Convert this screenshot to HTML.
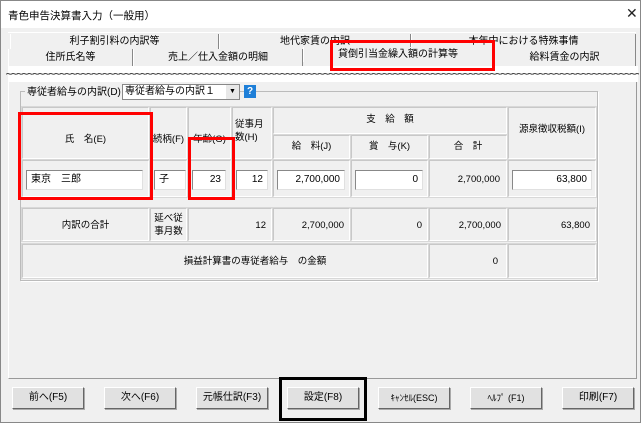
<!DOCTYPE html>
<html><head><meta charset="utf-8"><style>
*{margin:0;padding:0;box-sizing:border-box}
body{width:642px;height:427px;background:#fff;position:relative;overflow:hidden;font-family:"Liberation Sans","Noto Sans CJK JP",sans-serif;font-size:10px;color:#000}
.a{position:absolute}
.win{left:0;top:0;width:641px;height:423px;background:#f0f0f0;border:1px solid #888}
.title{left:1px;top:1px;width:639px;height:27px;background:#fff}
.tab{position:absolute;background:#f0f0f0;border-left:1px solid #fff;border-right:1px solid #888;text-align:center;line-height:15px;font-size:10px}
.cell{position:absolute;border:1px solid #c8c8c8;border-right-color:#fff;border-bottom-color:#fff;outline:1px solid #d8d8d8;text-align:center;font-size:9.5px}
.inp{position:absolute;background:#fff;border:1px solid #888;border-right-color:#e0e0e0;border-bottom-color:#e0e0e0;font-size:10px;line-height:17px;padding:0 4px;text-align:right}
.btn{position:absolute;top:387px;height:22px;width:72px;background:#e1e1e1;border:1px solid #fff;border-right-color:#666;border-bottom-color:#666;box-shadow:1px 1px 0 #aaa;text-align:center;line-height:20px;font-size:10px}
.red{position:absolute;border:3px solid #f00}
</style></head><body>
<div class="a win"></div>
<div class="a title"></div>
<div class="a" style="left:8px;top:8px;font-size:10.5px">青色申告決算書入力（一般用）</div>
<div class="a" style="left:626px;top:5px;font-size:14px;font-weight:300;color:#222">✕</div>
<!-- tabs -->
<div class="a" style="left:8px;top:32px;width:628px;height:32px;background:#f0f0f0;border-top:1px solid #fff"></div>
<div class="tab" style="left:10px;top:34px;width:209px">利子割引料の内訳等</div>
<div class="tab" style="left:219px;top:34px;width:192px">地代家賃の内訳</div>
<div class="tab" style="left:411px;top:34px;width:225px">本年中における特殊事情</div>
<div class="tab" style="left:8px;top:49px;width:125px;line-height:17px">住所氏名等</div>
<div class="tab" style="left:133px;top:49px;width:170px;line-height:17px">売上／仕入金額の明細</div>
<div class="tab" style="left:303px;top:47px;width:190px;background:#f0f0f0">貸倒引当金繰入額の計算等</div>
<div class="tab" style="left:493px;top:49px;width:143px;line-height:17px">給料賃金の内訳</div>
<div class="a" style="left:8px;top:66px;width:630px;height:16px;background:#fff"></div>
<div class="a" style="left:5px;top:69px;width:634px;font-size:10px;letter-spacing:-3px;overflow:hidden;white-space:nowrap;color:#222">∼∼∼∼∼∼∼∼∼∼∼∼∼∼∼∼∼∼∼∼∼∼∼∼∼∼∼∼∼∼∼∼∼∼∼∼∼∼∼∼∼∼∼∼∼∼∼∼∼∼∼∼∼∼∼∼∼∼∼∼∼∼∼∼∼∼∼∼∼∼∼∼∼∼∼∼∼∼∼∼∼∼∼∼∼∼∼∼∼∼∼∼∼∼∼∼∼∼∼∼∼∼∼∼∼∼∼∼∼∼∼∼∼∼∼∼∼∼∼∼∼∼∼∼</div>
<div class="red" style="left:330px;top:40px;width:165px;height:31px"></div>
<!-- panel -->
<div class="a" style="left:8px;top:82px;width:629px;height:297px;border:1px solid #fff;border-right-color:#999;border-bottom-color:#999;border-top:none"></div>
<div class="a" style="left:20px;top:91px;width:578px;height:190px;border:1px solid #bbb;box-shadow:1px 1px 0 #fff"></div>
<div class="a" style="left:25px;top:83px;background:#f0f0f0;padding:0 2px;font-size:10px">専従者給与の内訳(D)</div>
<div class="a" style="left:122px;top:84px;width:118px;height:16px;background:#fff;border:1px solid #888;font-size:10px;line-height:14px;padding-left:2px">専従者給与の内訳１</div>
<div class="a" style="left:226px;top:85px;width:13px;height:14px;background:#e8e8e8;font-size:7px;text-align:center;line-height:14px">▼</div>
<div class="a" style="left:244px;top:85px;width:12px;height:13px;background:#1e7fd8;color:#fff;font-weight:bold;font-size:10px;text-align:center;line-height:13px">?</div>
<!-- table header -->
<div class="cell" style="left:22px;top:107px;width:127px;height:52px;line-height:64px">氏　名(E)</div>
<div class="cell" style="left:150px;top:107px;width:37px;height:52px;line-height:64px">続柄(F)</div>
<div class="cell" style="left:188px;top:107px;width:43px;height:52px;line-height:64px">年齢(G)</div>
<div class="cell" style="left:232px;top:107px;width:40px;height:52px;padding-top:10px;line-height:13px;text-align:left;padding-left:2px">従事月<br>数(H)</div>
<div class="cell" style="left:273px;top:107px;width:234px;height:27px;line-height:24px">支　給　額</div>
<div class="cell" style="left:273px;top:135px;width:77px;height:24px;line-height:22px">給　料(J)</div>
<div class="cell" style="left:351px;top:135px;width:77px;height:24px;line-height:22px">賞　与(K)</div>
<div class="cell" style="left:429px;top:135px;width:78px;height:24px;line-height:22px">合　計</div>
<div class="cell" style="left:508px;top:107px;width:88px;height:52px;line-height:44px">源泉徴収税額(I)</div>
<!-- data row -->
<div class="cell" style="left:22px;top:160px;width:127px;height:37px"></div>
<div class="cell" style="left:150px;top:160px;width:37px;height:37px"></div>
<div class="cell" style="left:188px;top:160px;width:43px;height:37px"></div>
<div class="cell" style="left:232px;top:160px;width:40px;height:37px"></div>
<div class="cell" style="left:273px;top:160px;width:77px;height:37px"></div>
<div class="cell" style="left:351px;top:160px;width:77px;height:37px"></div>
<div class="cell" style="left:429px;top:160px;width:78px;height:37px;line-height:37px;text-align:right;padding-right:6px">2,700,000</div>
<div class="cell" style="left:508px;top:160px;width:88px;height:37px"></div>
<div class="inp" style="left:26px;top:170px;width:117px;height:20px;text-align:left">東京　三郎</div>
<div class="inp" style="left:154px;top:170px;width:32px;height:20px;text-align:left">子</div>
<div class="inp" style="left:192px;top:170px;width:34px;height:20px">23</div>
<div class="inp" style="left:236px;top:170px;width:32px;height:20px">12</div>
<div class="inp" style="left:277px;top:170px;width:68px;height:20px">2,700,000</div>
<div class="inp" style="left:355px;top:170px;width:68px;height:20px">0</div>
<div class="inp" style="left:512px;top:170px;width:80px;height:20px">63,800</div>
<div class="red" style="left:18px;top:112px;width:135px;height:88px"></div>
<div class="red" style="left:188px;top:137px;width:47px;height:63px"></div>
<!-- totals -->
<div class="cell" style="left:22px;top:208px;width:127px;height:33px;line-height:33px">内訳の合計</div>
<div class="cell" style="left:150px;top:208px;width:37px;height:33px;line-height:13px;padding-top:3px">延べ従<br>事月数</div>
<div class="cell" style="left:188px;top:208px;width:84px;height:33px;line-height:33px;text-align:right;padding-right:5px">12</div>
<div class="cell" style="left:273px;top:208px;width:77px;height:33px;line-height:33px;text-align:right;padding-right:5px">2,700,000</div>
<div class="cell" style="left:351px;top:208px;width:77px;height:33px;line-height:33px;text-align:right;padding-right:5px">0</div>
<div class="cell" style="left:429px;top:208px;width:78px;height:33px;line-height:33px;text-align:right;padding-right:5px">2,700,000</div>
<div class="cell" style="left:508px;top:208px;width:88px;height:33px;line-height:33px;text-align:right;padding-right:5px">63,800</div>
<div class="cell" style="left:22px;top:244px;width:406px;height:34px;line-height:34px;padding-left:60px">損益計算書の専従者給与　の金額</div>
<div class="cell" style="left:429px;top:244px;width:78px;height:34px;line-height:34px;text-align:right;padding-right:8px">0</div>
<div class="cell" style="left:508px;top:244px;width:88px;height:34px"></div>
<!-- buttons -->
<div class="btn" style="left:12px">前へ(F5)</div>
<div class="btn" style="left:104px">次へ(F6)</div>
<div class="btn" style="left:196px">元帳仕訳(F3)</div>
<div class="btn" style="left:287px">設定(F8)</div>
<div class="btn" style="left:378px;font-size:9px">ｷｬﾝｾﾙ(ESC)</div>
<div class="btn" style="left:470px;font-size:9px">ﾍﾙﾌﾟ (F1)</div>
<div class="btn" style="left:562px">印刷(F7)</div>
<div class="a" style="left:279px;top:377px;width:88px;height:44px;border:3px solid #000"></div>
</body></html>
